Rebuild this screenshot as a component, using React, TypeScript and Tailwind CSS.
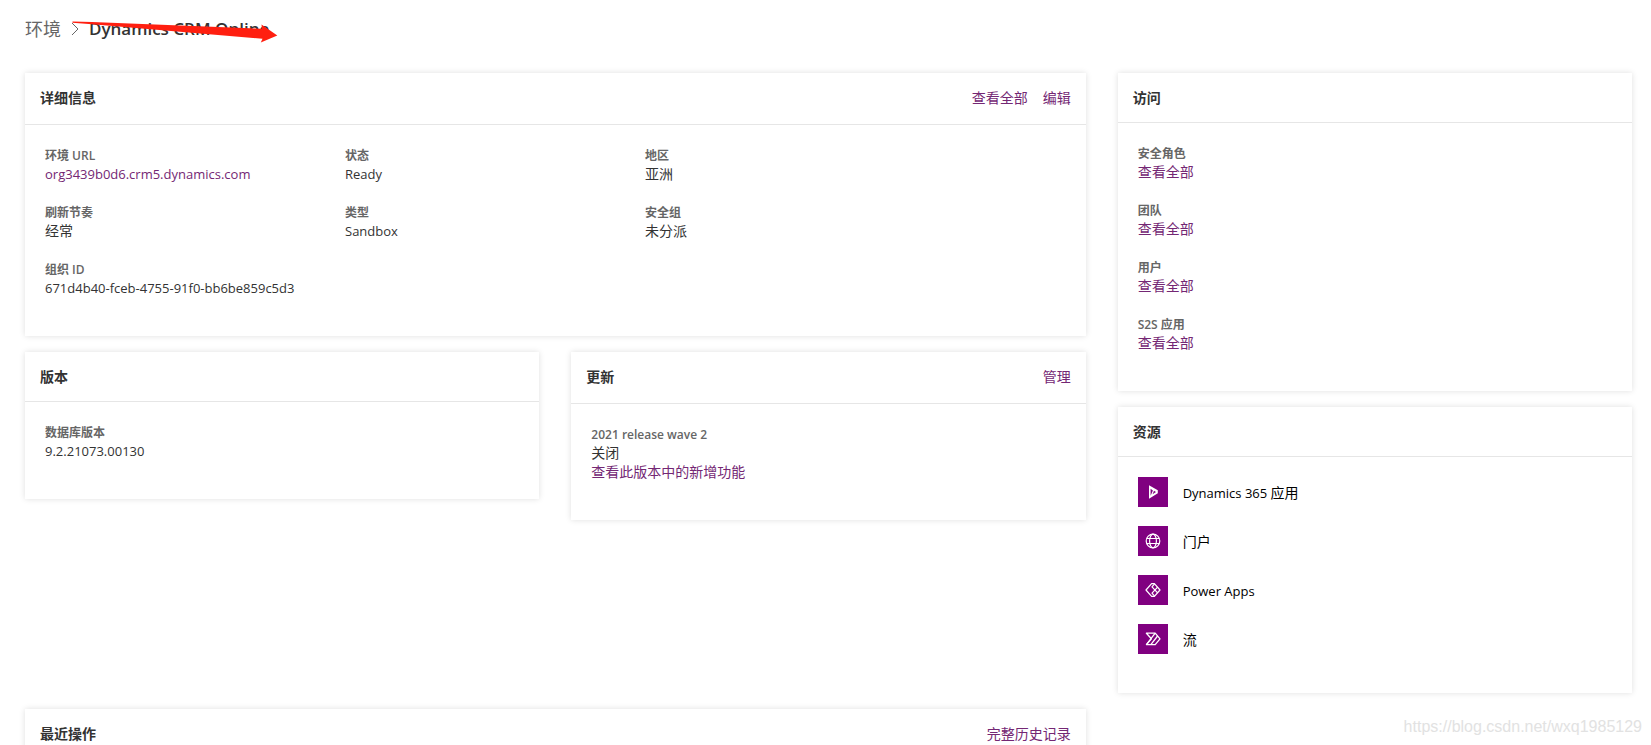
import type { ReactNode } from "react";

const fontStack =
  "font-['Open_Sans','Noto_Sans_CJK_SC',sans-serif]";

interface CardProps {
  title: string;
  actions?: string[];
  children?: ReactNode;
}

function Card({ title, actions, children }: CardProps) {
  return (
    <section className="bg-white shadow-[0_0_6px_rgba(0,0,0,0.13)]">
      <header className="flex items-start justify-between border-b border-[#e6e6e6] p-[15px]">
        <h2 className="text-[14px] leading-[19px] font-semibold text-[#333333]">
          {title}
        </h2>
        {actions && (
          <nav className="flex gap-[15px] pb-0.5">
            {actions.map((action) => (
              <a
                key={action}
                href="#"
                className="text-[14px] leading-[19px] text-[#742774]"
              >
                {action}
              </a>
            ))}
          </nav>
        )}
      </header>
      <div className="p-5">{children}</div>
    </section>
  );
}

interface FieldProps {
  label: string;
  value?: string;
  latin?: boolean; // chữ Latin dùng cỡ 13px
  link?: string;
}

function Field({ label, value, latin = false, link }: FieldProps) {
  const size = latin
    ? "pt-px text-[13px] leading-[18px]"
    : "text-[14px] leading-[19px]";

  return (
    <div className="pb-[19px]">
      <dt className="pt-0.5 text-[12px] leading-[17px] font-semibold text-[#666666]">
        {label}
      </dt>
      {value && <dd className={`${size} text-[#333333]`}>{value}</dd>}
      {link && (
        <dd className={size}>
          <a href="#" className="text-[#742774]">
            {link}
          </a>
        </dd>
      )}
    </div>
  );
}

function DynamicsIcon() {
  return (
    <svg width="16" height="16" viewBox="0 0 16 16" fill="#ffffff">
      <path
        fillRule="evenodd"
        d="M4 1.3L12.8 6.2V9.2L4 14.7ZM5.6 4.8V11.8L7.9 6.4ZM9 6.8L7.6 10.2L11 8Z"
      />
    </svg>
  );
}

function GlobeIcon() {
  return (
    <svg
      width="16"
      height="16"
      viewBox="0 0 16 16"
      fill="none"
      stroke="#ffffff"
      strokeWidth="1.2"
    >
      <circle cx="8" cy="8" r="6.8" />
      <ellipse cx="8" cy="8" rx="3.4" ry="6.8" />
      <path d="M2 5.5H14M2 10.5H14" />
    </svg>
  );
}

function PowerAppsIcon() {
  return (
    <svg
      width="16"
      height="16"
      viewBox="0 0 16 16"
      fill="none"
      stroke="#ffffff"
      strokeWidth="1.2"
      strokeLinejoin="round"
    >
      <path d="M6.6 1.6H9.4L15 8L9.4 14.4H6.6L1 8Z" />
      <path d="M9.6 1.8L7 4.8L12.6 10.8M9.6 14.2L7 11.2L12.6 5.2" />
    </svg>
  );
}

function FlowIcon() {
  return (
    <svg
      width="16"
      height="16"
      viewBox="0 0 16 16"
      fill="none"
      stroke="#ffffff"
      strokeWidth="1.3"
      strokeLinejoin="round"
    >
      <path d="M1.4 2.2H10.2L15 7.8L10.2 13.6H1.4L6.4 7.8Z" />
      <path d="M10.2 2.2L1.4 13.6M12.6 5L5.8 13.6" />
    </svg>
  );
}

const details: FieldProps[] = [
  { label: "环境 URL", link: "org3439b0d6.crm5.dynamics.com", latin: true },
  { label: "状态", value: "Ready", latin: true },
  { label: "地区", value: "亚洲" },
  { label: "刷新节奏", value: "经常" },
  { label: "类型", value: "Sandbox", latin: true },
  { label: "安全组", value: "未分派" },
  {
    label: "组织 ID",
    value: "671d4b40-fceb-4755-91f0-bb6be859c5d3",
    latin: true,
  },
];

const accessItems = ["安全角色", "团队", "用户", "S2S 应用"];

const resources = [
  { icon: <DynamicsIcon />, latin: "Dynamics 365 ", text: "应用" },
  { icon: <GlobeIcon />, latin: "", text: "门户" },
  { icon: <PowerAppsIcon />, latin: "Power Apps", text: "" },
  { icon: <FlowIcon />, latin: "", text: "流" },
];

export default function App() {
  return (
    <main
      lang="zh-CN"
      className={`relative h-screen overflow-hidden bg-white pt-[17px] pr-[19px] pl-[25px] ${fontStack}`}
    >
      <nav className="relative mb-8 flex h-6 items-center">
        <a href="#" className="text-[18px] leading-6 text-[#666666]">
          环境
        </a>
        <svg
          className="mx-[10px]"
          width="8"
          height="14"
          viewBox="0 0 8 14"
          fill="none"
          stroke="#666666"
        >
          <path d="M1 1L7 7L1 13" />
        </svg>
        <h1 className="text-[17px] leading-6 font-semibold text-[#333333]">
          Dynamics CRM Online
        </h1>
        {/* Mũi tên đỏ đè lên tiêu đề */}
        <svg
          className="absolute top-0 left-[47px]"
          width="206"
          height="28"
          viewBox="0 0 206 28"
          fill="#ff1f10"
        >
          <path d="M0.5 4.4L20 5L190 11.7L189.5 7.6L205.3 18.4L188.8 25.4L190.5 21.7L20 7.2L0.5 5.8Z" />
        </svg>
      </nav>

      <div className="grid grid-cols-3 items-start gap-x-8 gap-y-4">
        <div className="col-span-2 flex flex-col gap-4">
          <Card title="详细信息" actions={["查看全部", "编辑"]}>
            <dl className="grid grid-cols-[300px_300px_1fr]">
              {details.map((item) => (
                <Field key={item.label} {...item} />
              ))}
            </dl>
          </Card>

          <div className="grid grid-cols-2 items-start gap-x-8">
            <Card title="版本">
              <dl>
                <Field label="数据库版本" value="9.2.21073.00130" latin />
              </dl>
            </Card>
            <Card title="更新" actions={["管理"]}>
              <dl>
                <Field
                  label="2021 release wave 2"
                  value="关闭"
                  link="查看此版本中的新增功能"
                />
              </dl>
            </Card>
          </div>
        </div>

        <div className="flex flex-col gap-4">
          <Card title="访问">
            <dl>
              {accessItems.map((label) => (
                <Field key={label} label={label} link="查看全部" />
              ))}
            </dl>
          </Card>

          <Card title="资源">
            <ul>
              {resources.map(({ icon, latin, text }) => (
                <li key={latin + text} className="pb-[19px]">
                  <a
                    href="#"
                    className="flex items-center gap-[15px] text-black"
                  >
                    <span className="flex size-[30px] items-center justify-center bg-[#800080]">
                      {icon}
                    </span>
                    <span className="pt-0.5 text-[14px] leading-[19px]">
                      <span className="text-[13px]">{latin}</span>
                      {text}
                    </span>
                  </a>
                </li>
              ))}
            </ul>
          </Card>
        </div>

        <div className="col-span-2">
          <Card title="最近操作" actions={["完整历史记录"]} />
        </div>
      </div>

      <p className="absolute right-[9px] bottom-[6px] font-['Liberation_Sans',sans-serif] text-[16px] leading-6 text-[#e2e2e2]">
        https://blog.csdn.net/wxq1985129
      </p>
    </main>
  );
}
